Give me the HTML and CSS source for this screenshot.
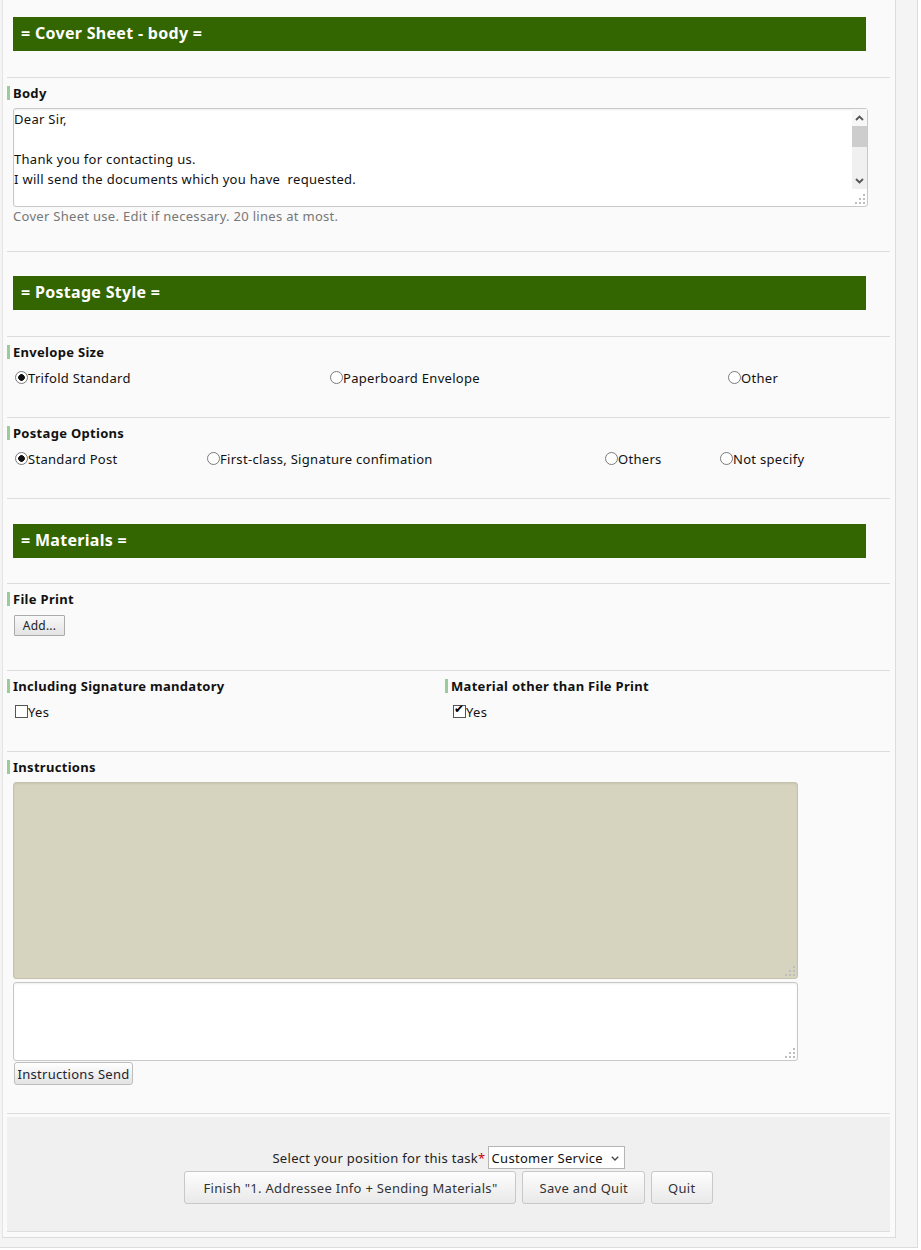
FILE: index.html
```html
<!DOCTYPE html>
<html lang="en">
<head>
<meta charset="utf-8">
<title>Cover Sheet</title>
<link rel="stylesheet" href="styles.css">
</head>
<body>
<div class="frame">
  <div class="panel">
    <section class="hdr-row first"><h2 class="hdr">= Cover Sheet - body =</h2></section>

    <section class="row row-body">
      <div class="lbl">Body</div>
      <div class="ta-wrap ta-body-wrap">
        <textarea class="ta ta-body">Dear Sir,

Thank you for contacting us.
I will send the documents which you have  requested.</textarea>
        <div class="vscroll">
          <div class="sb-btn"><svg width="9" height="6" viewBox="0 0 9 6"><path d="M1 5 L4.5 1.5 L8 5" fill="none" stroke="#555" stroke-width="1.8"/></svg></div>
          <div class="sb-thumb"></div>
          <div class="sb-track"></div>
          <div class="sb-btn"><svg width="9" height="6" viewBox="0 0 9 6"><path d="M1 1 L4.5 4.5 L8 1" fill="none" stroke="#555" stroke-width="1.8"/></svg></div>
        </div>
        <svg class="grip" width="11" height="11" viewBox="0 0 11 11"><rect x="8" y="0" width="2" height="2"/><rect x="4" y="4" width="2" height="2"/><rect x="8" y="4" width="2" height="2"/><rect x="0" y="8" width="2" height="2"/><rect x="4" y="8" width="2" height="2"/><rect x="8" y="8" width="2" height="2"/></svg>
      </div>
      <div class="help">Cover Sheet use. Edit if necessary. 20 lines at most.</div>
    </section>

    <section class="hdr-row"><h2 class="hdr">= Postage Style =</h2></section>

    <section class="row row-opt">
      <div class="lbl">Envelope Size</div>
      <div class="opts opts-env">
        <label class="opt"><input type="radio" name="env" checked>Trifold Standard</label>
        <label class="opt"><input type="radio" name="env">Paperboard Envelope</label>
        <label class="opt"><input type="radio" name="env">Other</label>
      </div>
    </section>

    <section class="row row-opt">
      <div class="lbl">Postage Options</div>
      <div class="opts opts-post">
        <label class="opt"><input type="radio" name="post" checked>Standard Post</label>
        <label class="opt"><input type="radio" name="post">First-class, Signature confimation</label>
        <label class="opt"><input type="radio" name="post">Others</label>
        <label class="opt"><input type="radio" name="post">Not specify</label>
      </div>
    </section>

    <section class="hdr-row third"><h2 class="hdr">= Materials =</h2></section>

    <section class="row row-file">
      <div class="lbl">File Print</div>
      <button class="btn-add" type="button">Add...</button>
    </section>

    <section class="row row-opt two-col">
      <div class="col">
        <div class="lbl">Including Signature mandatory</div>
        <div class="opts">
          <label class="opt"><input type="checkbox">Yes</label>
        </div>
      </div>
      <div class="col">
        <div class="lbl">Material other than File Print</div>
        <div class="opts">
          <label class="opt"><input type="checkbox" checked>Yes</label>
        </div>
      </div>
    </section>

    <section class="row row-instr">
      <div class="lbl">Instructions</div>
      <div class="ta-wrap ta-beige-wrap">
        <textarea class="ta ta-beige" readonly></textarea>
        <svg class="grip" width="11" height="11" viewBox="0 0 11 11"><rect x="8" y="0" width="2" height="2"/><rect x="4" y="4" width="2" height="2"/><rect x="8" y="4" width="2" height="2"/><rect x="0" y="8" width="2" height="2"/><rect x="4" y="8" width="2" height="2"/><rect x="8" y="8" width="2" height="2"/></svg>
      </div>
      <div class="ta-wrap ta-white-wrap">
        <textarea class="ta ta-white"></textarea>
        <svg class="grip" width="11" height="11" viewBox="0 0 11 11"><rect x="8" y="0" width="2" height="2"/><rect x="4" y="4" width="2" height="2"/><rect x="8" y="4" width="2" height="2"/><rect x="0" y="8" width="2" height="2"/><rect x="4" y="8" width="2" height="2"/><rect x="8" y="8" width="2" height="2"/></svg>
      </div>
      <button class="btn-send" type="button">Instructions Send</button>
    </section>

    <section class="foot">
      <div class="foot-box">
        <div class="pos-row">
          <span class="pos-label">Select your position for this task<span class="req">*</span></span>
          <span class="sel-wrap">
            <select class="sel"><option>Customer Service</option></select>
            <svg class="sel-chev" width="8" height="5" viewBox="0 0 8 5"><path d="M0.8 0.8 L4 4 L7.2 0.8" fill="none" stroke="#444" stroke-width="1.3"/></svg>
          </span>
        </div>
        <div class="btns">
          <button class="fbtn fbtn-wide" type="button">Finish "1. Addressee Info + Sending Materials"</button>
          <button class="fbtn" type="button">Save and Quit</button>
          <button class="fbtn" type="button">Quit</button>
        </div>
      </div>
    </section>
  </div>
</div>
</body>
</html>
```

FILE: styles.css
```css
* { box-sizing: border-box; }

body {
  margin: 0;
  background: #ffffff;
  font-family: "Noto Sans", "DejaVu Sans", sans-serif;
  font-size: 13px;
  color: #111;
  letter-spacing: 0.3px;
}

.frame {
  width: 918px;
  background: #f4f4f4;
  border-right: 1px solid #dcdcdc;
  border-bottom: 1px solid #dcdcdc;
  padding: 0 0 9px 2px;
}

.panel {
  width: 894px;
  background: #fafafa;
  border-left: 1px solid #e4e4e4;
  border-right: 1px solid #dcdcdc;
  border-bottom: 1px solid #dcdcdc;
  padding: 0 5px 5px 4px;
}

/* section headers */
.hdr-row {
  border-top: 1px solid #dddddd;
  padding: 24px 0 26px 6px;
}
.hdr-row.first { border-top: 0; padding-top: 17px; }
.hdr-row.third { padding: 25px 0 25px 6px; }

.hdr {
  margin: 0;
  width: 853px;
  height: 34px;
  background: #336600;
  color: #ffffff;
  font-size: 16px;
  font-weight: bold;
  line-height: 33px;
  padding-left: 8px;
}

/* field rows */
.row {
  border-top: 1px solid #dddddd;
  padding-top: 8px;
}

.lbl {
  border-left: 3px solid #99cc99;
  padding-left: 3px;
  line-height: 14px;
  font-size: 13px;
  font-weight: bold;
  color: #111;
}

.row-body { padding-bottom: 26px; }
.row-opt { padding-bottom: 29px; }
.row-file { padding-bottom: 34px; }
.row-instr { padding-bottom: 28px; }

/* textareas */
.ta-wrap {
  position: relative;
  margin-left: 6px;
}
.ta {
  display: block;
  width: 100%;
  height: 100%;
  resize: none;
  overflow: hidden;
  border: 1px solid #c8c8c8;
  border-radius: 3px;
  box-shadow: inset 0 1px 2px rgba(0, 0, 0, 0.07);
  background: #ffffff;
  font-family: "Noto Sans", "DejaVu Sans", sans-serif;
  font-size: 13px;
  letter-spacing: 0.3px;
  line-height: 20px;
  color: #111;
  padding: 0 16px 0 0;
  margin: 0;
}
.ta-body-wrap { width: 855px; height: 99px; margin-top: 8px; }
.ta-beige-wrap { width: 785px; height: 197px; margin-top: 8px; }
.ta-white-wrap { width: 785px; height: 79px; margin-top: 3px; }
.ta-beige { background: #d6d3bf; border-color: #c6c3ad; }

.grip {
  position: absolute;
  right: 2px;
  bottom: 2px;
  fill: #bdbdbd;
}

.vscroll {
  position: absolute;
  top: 1px;
  right: 1px;
  width: 15px;
  height: 80px;
  background: #f0f0f0;
  display: flex;
  flex-direction: column;
}
.sb-btn {
  height: 17px;
  display: flex;
  align-items: center;
  justify-content: center;
}
.sb-btn:first-child { background: #f7f7f7; }
.sb-thumb { height: 21px; background: #cdcdcd; }
.sb-track { flex: 1; }

.help {
  line-height: 18px;
  color: #777;
  margin-top: 0;
  padding-left: 6px;
}

/* options */
.opts {
  display: grid;
  margin-top: 9px;
  padding-left: 8px;
  line-height: 20px;
  height: 20px;
}
.opts-env { grid-template-columns: 315px 398px auto; }
.opts-post { grid-template-columns: 192px 398px 115px auto; }

.opt {
  display: flex;
  align-items: center;
  white-space: nowrap;
}

input[type="radio"] {
  appearance: none;
  -webkit-appearance: none;
  width: 13px;
  height: 13px;
  margin: 0;
  border: 1px solid #7a7a7a;
  border-radius: 50%;
  background: #ffffff;
  position: relative;
  top: -1px;
  flex: none;
}
input[type="radio"]:checked {
  background: radial-gradient(circle, #111 0, #111 3px, #ffffff 3.6px);
}

input[type="checkbox"] {
  appearance: none;
  -webkit-appearance: none;
  width: 13px;
  height: 13px;
  margin: 0;
  border: 1px solid #555;
  background: #ffffff;
  position: relative;
  top: -1px;
  flex: none;
}
input[type="checkbox"]:checked::before {
  content: "\2714";
  position: absolute;
  left: 0px;
  top: -5px;
  font-family: "DejaVu Sans", sans-serif;
  font-size: 12px;
  line-height: 16px;
  color: #000;
}

.two-col {
  display: grid;
  grid-template-columns: 438px 1fr;
}

/* buttons */
.btn-add {
  display: block;
  margin: 9px 0 0 7px;
  width: 51px;
  height: 21px;
  padding: 0;
  border: 1px solid #ababab;
  border-radius: 1px;
  background: linear-gradient(#f9f9f9, #e3e3e3);
  font-family: "Noto Sans", "DejaVu Sans", sans-serif;
  font-size: 12px;
  letter-spacing: 0.2px;
  color: #222;
}

.btn-send {
  display: block;
  margin: 1px 0 0 7px;
  width: 119px;
  height: 23px;
  padding: 0;
  border: 1px solid #bdbdbd;
  border-radius: 3px;
  background: linear-gradient(#ffffff, #e3e3e3);
  font-family: "Noto Sans", "DejaVu Sans", sans-serif;
  font-size: 13px;
  letter-spacing: 0.3px;
  color: #223;
}

/* footer */
.foot {
  border-top: 1px solid #dddddd;
  padding-top: 3px;
}
.foot-box {
  background: #f0f0f0;
  border-bottom: 1px solid #dddddd;
  padding: 29px 0 27px;
  display: flex;
  flex-direction: column;
  align-items: center;
  gap: 2px;
}
.pos-row {
  display: flex;
  align-items: center;
  height: 23px;
  color: #222;
}
.req { color: #cc0000; }

.sel-wrap {
  position: relative;
  margin-left: 2px;
  display: block;
  height: 23px;
}
.sel {
  appearance: none;
  -webkit-appearance: none;
  width: 137px;
  height: 23px;
  border: 1px solid #b5b5b5;
  border-radius: 0;
  background: #ffffff;
  font-family: "Noto Sans", "DejaVu Sans", sans-serif;
  font-size: 13px;
  letter-spacing: 0.3px;
  color: #111;
  padding: 0 0 0 3px;
  margin: 0;
}
.sel-chev {
  position: absolute;
  right: 6px;
  top: 10px;
}

.btns {
  display: flex;
  gap: 6px;
}
.fbtn {
  height: 33px;
  padding: 0 16px;
  border: 1px solid #c8c8c8;
  border-radius: 3px;
  background: linear-gradient(#fdfdfd, #e9e9e9);
  font-family: "Noto Sans", "DejaVu Sans", sans-serif;
  font-size: 13px;
  letter-spacing: 0.3px;
  color: #333;
}
.fbtn-wide { padding: 0 18px; }
```
